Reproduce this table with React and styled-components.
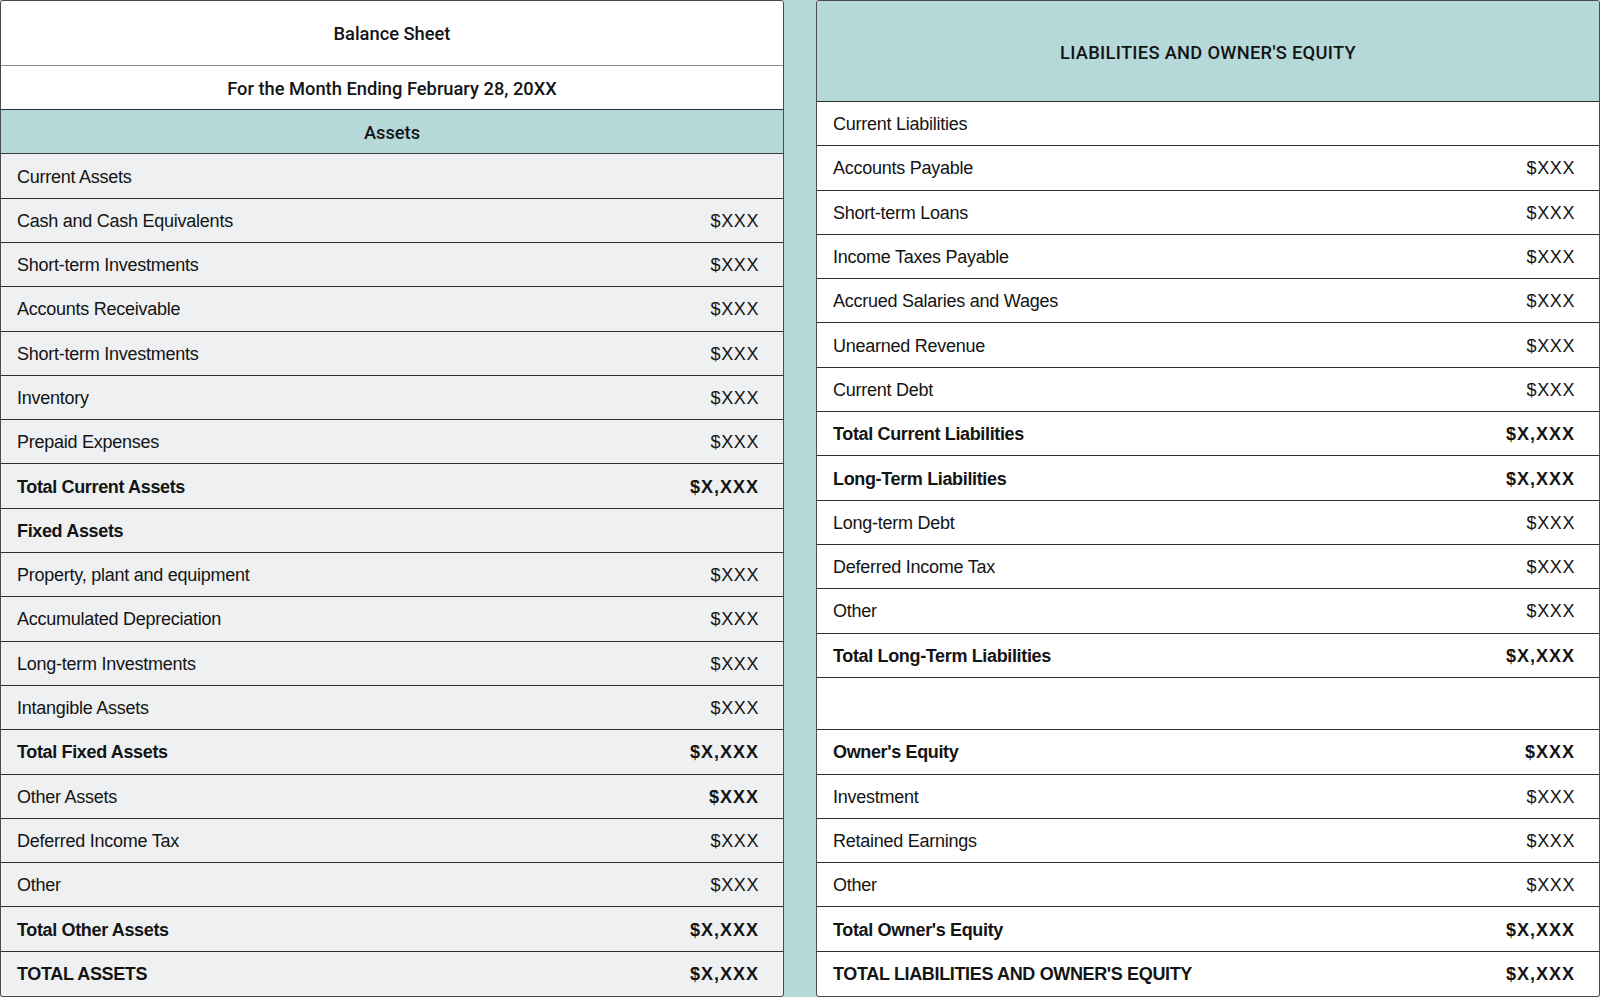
import styled, { createGlobalStyle } from 'styled-components';

const Global = createGlobalStyle`
    html, body {
        margin: 0;
        padding: 0;
        background: #b5d8d9;
    }
    * {
        box-sizing: border-box;
    }
`

const ROW = '44.3px'

const Page = styled.main`
    display: flex;
    gap: 32px;
    width: 1600px;
    height: 997px;
    background: #b5d8d9;
    font-family: "Liberation Sans", Arial, sans-serif;
    color: #141414;
`

const Sheet = styled.section`
    flex: 0 0 784px;
    display: flex;
    flex-direction: column;
    height: 100%;
    border: 1px solid #4a4a4a;
    border-radius: 3px;
    overflow: hidden;
    background: ${p => p.$tint ? '#eef0f2' : '#ffffff'};
`

const Heading = styled.div`
    display: flex;
    align-items: center;
    justify-content: center;
    flex: ${p => p.$grow ? '1 1 0' : 'none'};
    height: ${p => p.$height || ROW};
    padding-top: 2px;
    background: ${p => p.$bg || '#ffffff'};
    border-bottom: 1px solid ${p => p.$line || '#2e2e2e'};
    font-family: Roboto, "Liberation Sans", sans-serif;
    font-weight: 500;
    font-size: 18.3px;
    letter-spacing: ${p => p.$caps ? '0.3px' : '0'};
    color: #141414;
`

const Row = styled.div`
    display: flex;
    align-items: center;
    justify-content: space-between;
    flex: none;
    height: ${ROW};
    padding: 2px 24px 0 16px;
    border-bottom: 1px solid #2e2e2e;
    font-size: 18px;

    &:last-child {
        border-bottom: none;
    }
`

const Spacer = styled.div`
    flex: 1 1 0;
    border-bottom: 1px solid #2e2e2e;
`

const Label = styled.span`
    font-weight: ${p => p.$bold ? 700 : 400};
    letter-spacing: ${p => p.$bold ? '-0.35px' : '-0.25px'};
`

const Amount = styled.span`
    font-weight: ${p => p.$bold ? 700 : 400};
    letter-spacing: ${p => p.$bold ? '1px' : '0.6px'};
`

const assets = [
    { label: 'Current Assets' },
    { label: 'Cash and Cash Equivalents', value: '$XXX' },
    { label: 'Short-term Investments', value: '$XXX' },
    { label: 'Accounts Receivable', value: '$XXX' },
    { label: 'Short-term Investments', value: '$XXX' },
    { label: 'Inventory', value: '$XXX' },
    { label: 'Prepaid Expenses', value: '$XXX' },
    { label: 'Total Current Assets', value: '$X,XXX', bold: true },
    { label: 'Fixed Assets', bold: true },
    { label: 'Property, plant and equipment', value: '$XXX' },
    { label: 'Accumulated Depreciation', value: '$XXX' },
    { label: 'Long-term Investments', value: '$XXX' },
    { label: 'Intangible Assets', value: '$XXX' },
    { label: 'Total Fixed Assets', value: '$X,XXX', bold: true },
    { label: 'Other Assets', value: '$XXX', boldValue: true },
    { label: 'Deferred Income Tax', value: '$XXX' },
    { label: 'Other', value: '$XXX' },
    { label: 'Total Other Assets', value: '$X,XXX', bold: true },
    { label: 'TOTAL ASSETS', value: '$X,XXX', bold: true },
]

const liabilities = [
    { label: 'Current Liabilities' },
    { label: 'Accounts Payable', value: '$XXX' },
    { label: 'Short-term Loans', value: '$XXX' },
    { label: 'Income Taxes Payable', value: '$XXX' },
    { label: 'Accrued Salaries and Wages', value: '$XXX' },
    { label: 'Unearned Revenue', value: '$XXX' },
    { label: 'Current Debt', value: '$XXX' },
    { label: 'Total Current Liabilities', value: '$X,XXX', bold: true },
    { label: 'Long-Term Liabilities', value: '$X,XXX', bold: true },
    { label: 'Long-term Debt', value: '$XXX' },
    { label: 'Deferred Income Tax', value: '$XXX' },
    { label: 'Other', value: '$XXX' },
    { label: 'Total Long-Term Liabilities', value: '$X,XXX', bold: true },
]

const equity = [
    { label: "Owner's Equity", value: '$XXX', bold: true },
    { label: 'Investment', value: '$XXX' },
    { label: 'Retained Earnings', value: '$XXX' },
    { label: 'Other', value: '$XXX' },
    { label: "Total Owner's Equity", value: '$X,XXX', bold: true },
    { label: "TOTAL LIABILITIES AND OWNER'S EQUITY", value: '$X,XXX', bold: true },
]

const Line = ({ item }) => (
    <Row>
        <Label $bold={item.bold}>{item.label}</Label>
        {item.value && <Amount $bold={item.bold || item.boldValue}>{item.value}</Amount>}
    </Row>
)

const App = () => {
    return (
    <>
    <Global />
    <Page>
        <Sheet $tint>
            <Heading $grow $line="#8a8a8a">Balance Sheet</Heading>
            <Heading>For the Month Ending February 28, 20XX</Heading>
            <Heading $bg="#b5d8d9" $line="#3c3c3c">Assets</Heading>
            {assets.map((item, i) => <Line key={i} item={item} />)}
        </Sheet>
        <Sheet>
            <Heading $height="101px" $bg="#b5d8d9" $caps>LIABILITIES AND OWNER'S EQUITY</Heading>
            {liabilities.map((item, i) => <Line key={i} item={item} />)}
            <Spacer />
            {equity.map((item, i) => <Line key={i} item={item} />)}
        </Sheet>
    </Page>
    </>
    )
}

export default App
